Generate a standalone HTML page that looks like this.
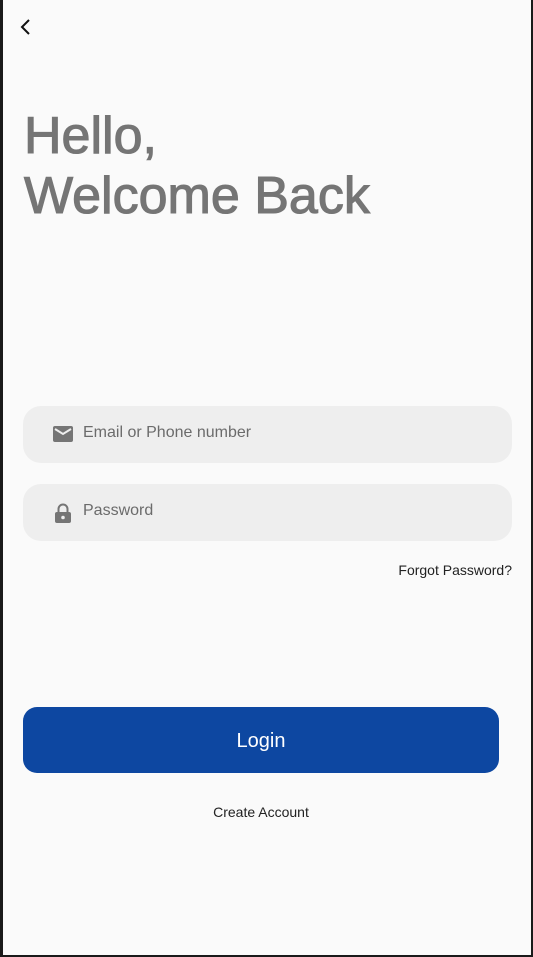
<!DOCTYPE html>
<html><head><meta charset="utf-8"><style>
html,body{margin:0;padding:0}
body{width:533px;height:957px;background:#1a1a1a;position:relative;overflow:hidden;font-family:"Liberation Sans",sans-serif}
.page{position:absolute;left:3px;top:0;width:528px;height:955px;background:#fafafa}
.abs{position:absolute}
h1{position:absolute;left:21px;top:106px;margin:0;font-size:52px;line-height:60px;font-weight:normal;color:#757575;-webkit-text-stroke:1.1px #757575;letter-spacing:0px}
.field{position:absolute;left:20px;width:489px;height:57px;background:#eeeeee;border-radius:18px}
.field span{position:absolute;left:60px;top:18px;font-size:16px;color:#6b6b6b}
.field svg{position:absolute;left:29px;top:18px}
.btn{position:absolute;left:20px;top:707px;width:476px;height:66px;background:#0d47a1;border-radius:14px;color:#fff;font-size:20px;text-align:center;line-height:68px}
</style></head><body>
<div class="page">
<svg class="abs" style="left:16px;top:18px" width="16" height="18" viewBox="0 0 16 18"><path d="M10 2 L3 9 L10 16" fill="none" stroke="#111" stroke-width="2"/></svg>
<h1>Hello,<br>Welcome Back</h1>
<div class="field" style="top:406px"><svg width="22" height="20" viewBox="0 0 22 20"><rect x="1" y="2" width="20" height="16" rx="2" fill="#757575"/><path d="M3 5 L11 10 L19 5" fill="none" stroke="#eee" stroke-width="2"/></svg><span>Email or Phone number</span></div>
<div class="field" style="top:484px"><svg width="22" height="22" viewBox="0 0 22 22"><path d="M6.5 10 V7 a4.5 4.5 0 0 1 9 0 V10" fill="none" stroke="#757575" stroke-width="2"/><rect x="3" y="10" width="16" height="11" rx="2" fill="#757575"/><circle cx="11" cy="15.5" r="1.8" fill="#eee"/></svg><span>Password</span></div>
<div class="abs" style="right:19px;top:562px;font-size:14px;color:#222">Forgot Password?</div>
<div class="btn">Login</div>
<div class="abs" style="left:0;width:516px;top:804px;text-align:center;font-size:14px;color:#222">Create Account</div>
</div>
</body></html>
